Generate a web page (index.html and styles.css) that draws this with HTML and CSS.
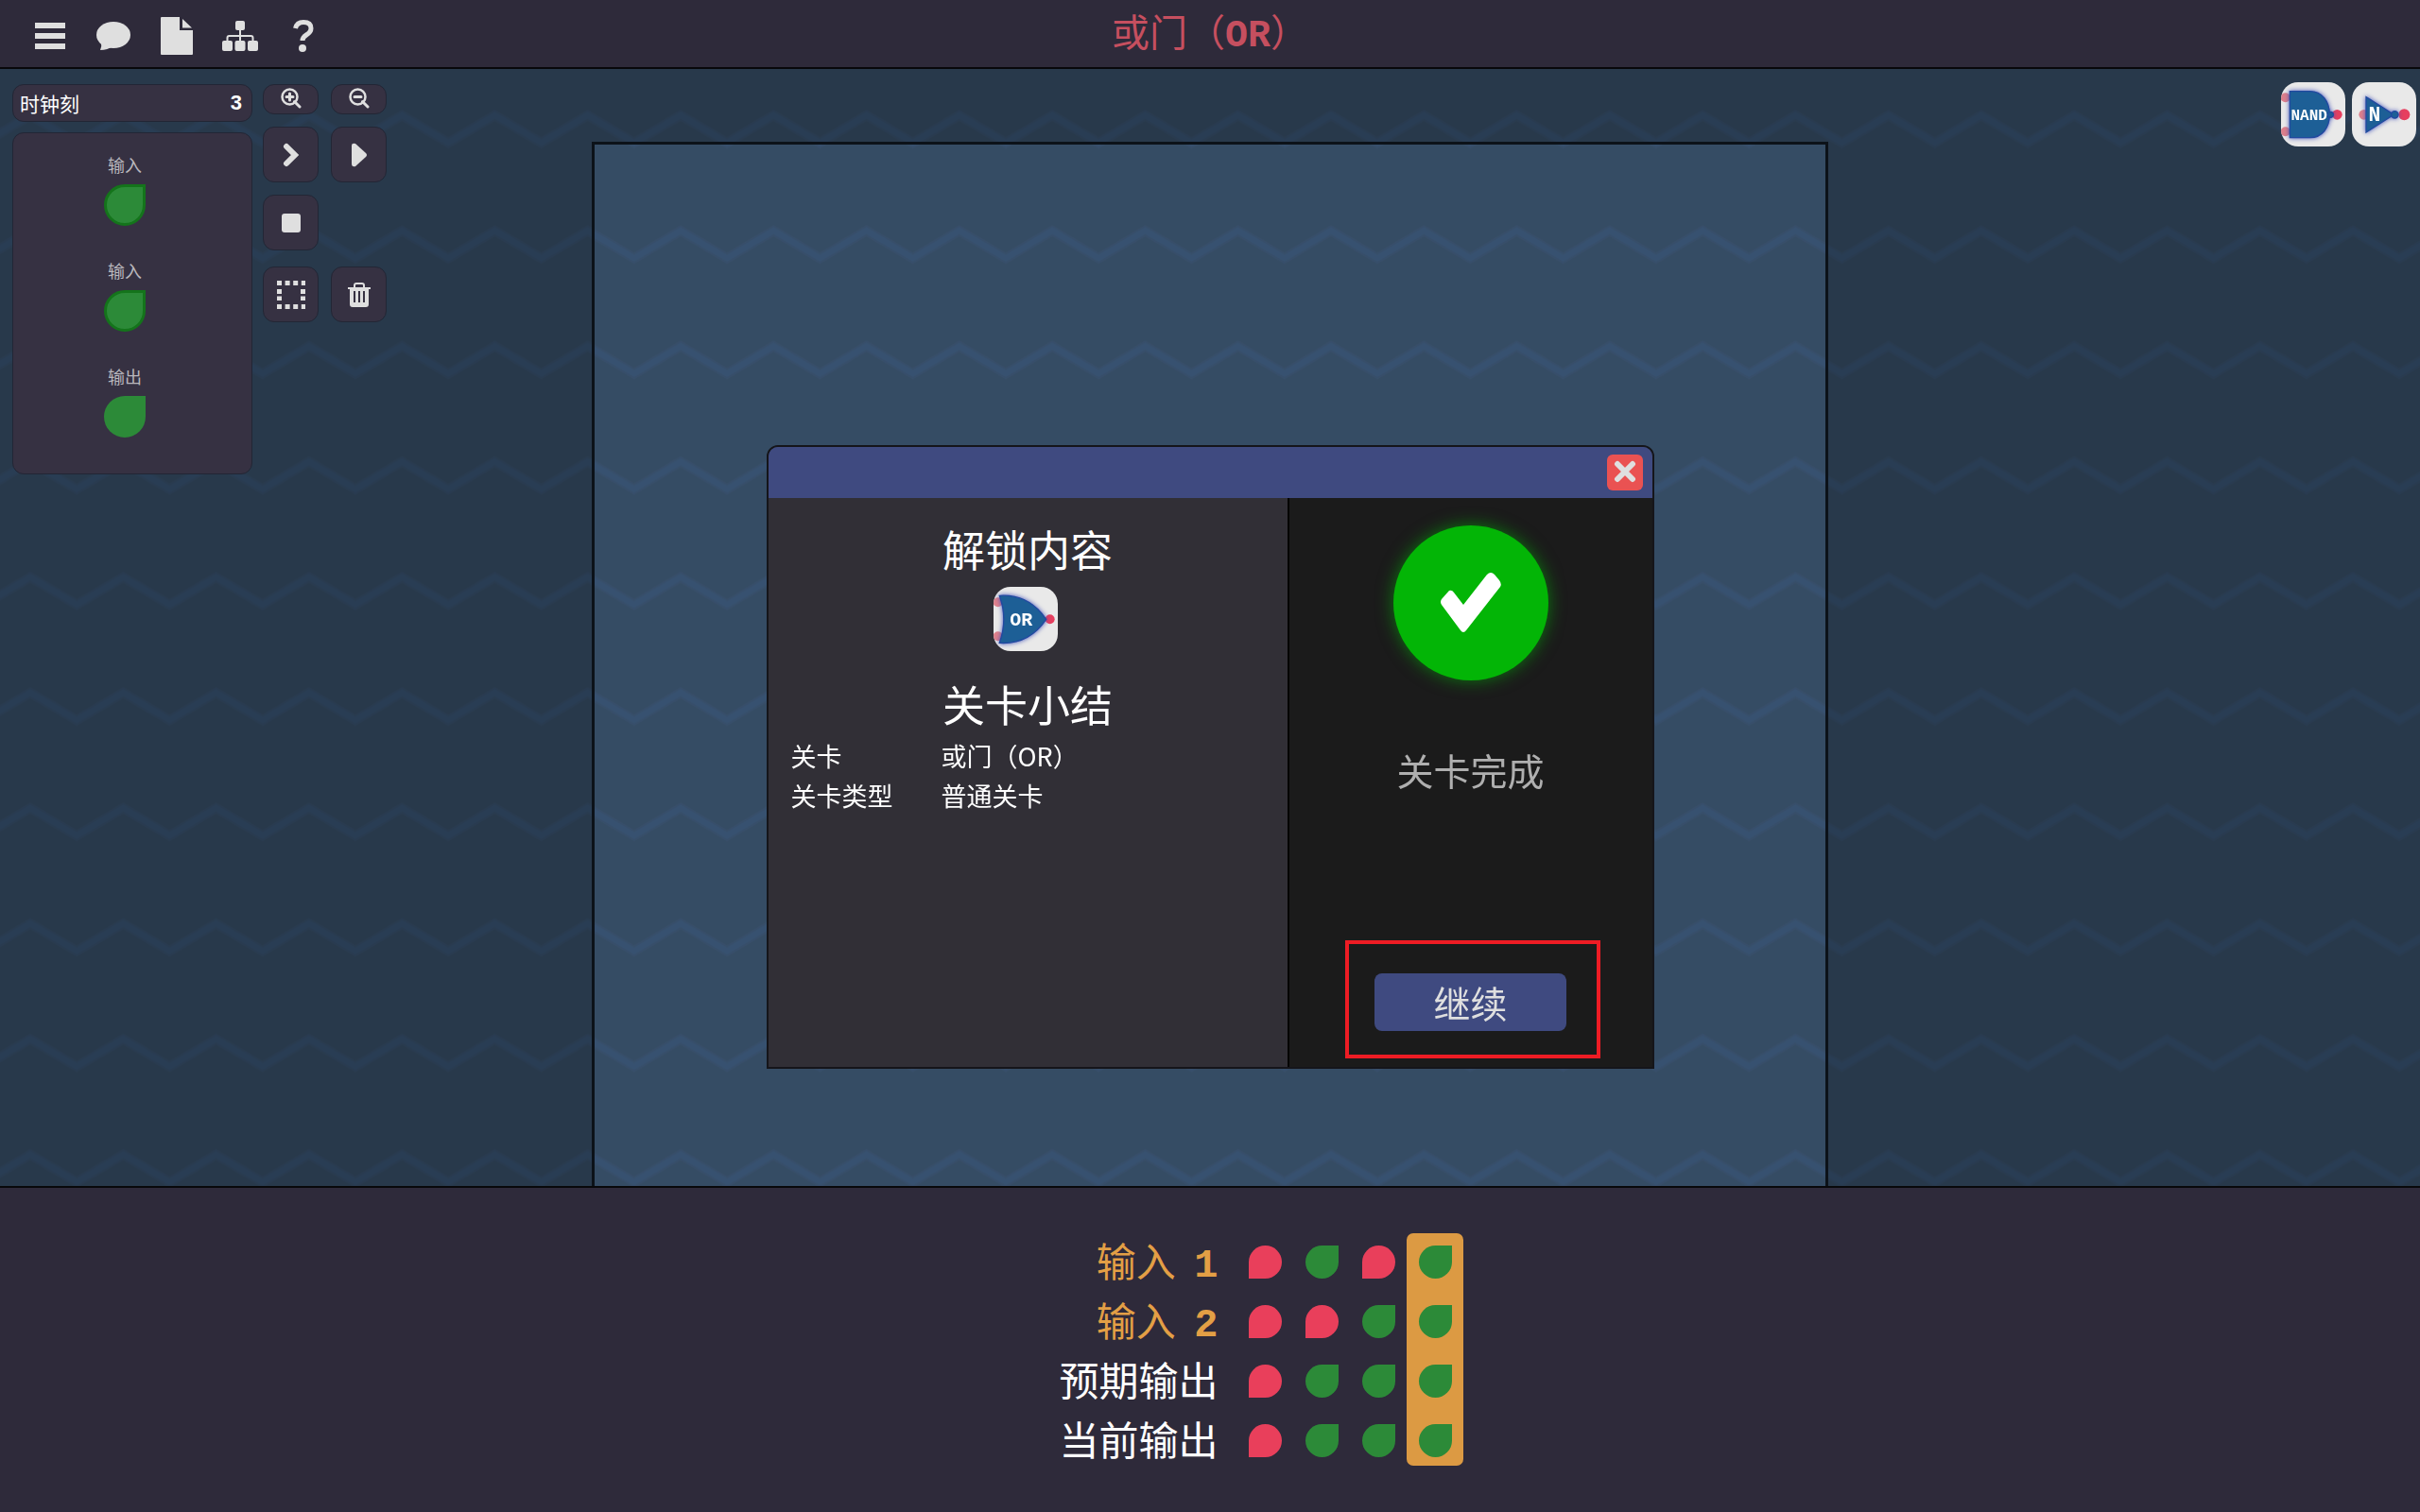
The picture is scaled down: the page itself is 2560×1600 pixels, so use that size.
FILE: index.html
```html
<!DOCTYPE html>
<html lang="zh-CN">
<head>
<meta charset="utf-8">
<meta name="viewport" content="width=device-width, initial-scale=1">
<title>或门（OR）</title>
<link rel="stylesheet" href="styles.css">
</head>
<body>
<header class="topbar">
  <nav class="topbar-nav">
    <button class="nav-button" aria-label="菜单">
      <svg width="34" height="30" viewBox="0 0 34 30"><path d="M1 1h32v6H1zM1 12h32v6H1zM1 23h32v6H1z"/></svg>
    </button>
    <button class="nav-button" aria-label="对话">
      <svg width="38" height="34" viewBox="0 0 38 34"><ellipse cx="19" cy="16" rx="18" ry="14"/><path d="M4 20l2 5q1 3-1 7 8 0 13-4z"/></svg>
    </button>
    <button class="nav-button" aria-label="文件">
      <svg width="34" height="40" viewBox="0 0 34 40"><path d="M1 0h19v14h14v25q0 1-1 1H1q-1 0-1-1V1q0-1 1-1zM23 2l10 9.500H23z"/></svg>
    </button>
    <button class="nav-button" aria-label="结构">
      <svg width="38" height="34" viewBox="0 0 38 34"><rect x="14" y="1" width="10" height="10" rx="2"/><rect x="0" y="22" width="11" height="11" rx="2"/><rect x="13.500" y="22" width="11" height="11" rx="2"/><rect x="27" y="22" width="11" height="11" rx="2"/><path d="M19 10v13M5.500 23v-4q0-2 2-2h23q2 0 2 2v4" fill="none" stroke="currentColor" stroke-width="2"/></svg>
    </button>
    <button class="nav-button" aria-label="帮助">
      <svg width="24" height="36" viewBox="0 0 24 36"><path d="M3.500 10Q5 3.500 12 3.500q8 0 8 6.500 0 4-5 7-4 2.500-4 6" fill="none" stroke="currentColor" stroke-width="5"/><circle cx="11" cy="31" r="4"/></svg>
    </button>
  </nav>
  <h1 class="level-title">或门（<span class="latin">OR</span>）</h1>
</header>

<main class="canvas">
  <svg class="waves" width="100%" height="100%" aria-hidden="true">
    <defs>
      <pattern id="wave" x="-17.100" y="30" width="98.280" height="122.200" patternUnits="userSpaceOnUse">
        <path d="M-49.140 19L0 48 49.140 19 98.280 48 147.420 19" fill="none" stroke="#293b50" stroke-width="10"/>
        <path d="M-49.140 19L0 48 49.140 19 98.280 48 147.420 19" fill="none" stroke="#293d54" stroke-width="6"/>
      </pattern>
    </defs>
    <rect width="100%" height="100%" fill="url(#wave)"/>
  </svg>

  <aside class="tools">
    <div class="tools-info">
      <div class="clock"><span>时钟刻</span><output class="clock-value">3</output></div>
      <ul class="pins">
        <li class="pin"><span>输入</span><i class="leaf leaf-on leaf-large leaf-ring"></i></li>
        <li class="pin"><span>输入</span><i class="leaf leaf-on leaf-large leaf-ring"></i></li>
        <li class="pin"><span>输出</span><i class="leaf leaf-on leaf-large"></i></li>
      </ul>
    </div>
    <div class="tools-actions">
      <div class="tool-group zoom-group">
        <button class="tool tool-short" aria-label="放大">
          <svg width="22" height="22" viewBox="0 0 22 22"><path d="M14.500 14.500L20 20M9.500 6v7M6 9.500h7" stroke="currentColor" stroke-width="3" stroke-linecap="round"/><circle cx="9.500" cy="9.500" r="8" fill="none" stroke="currentColor" stroke-width="2.500"/></svg>
        </button>
        <button class="tool tool-short" aria-label="缩小">
          <svg width="22" height="22" viewBox="0 0 22 22"><path d="M14.500 14.500L20 20M6 9.500h7" stroke="currentColor" stroke-width="3" stroke-linecap="round"/><circle cx="9.500" cy="9.500" r="8" fill="none" stroke="currentColor" stroke-width="2.500"/></svg>
        </button>
      </div>
      <div class="tool-group">
        <button class="tool" aria-label="单步">
          <svg width="20" height="26" viewBox="0 0 20 26"><path d="M5 4l9 9-9 9" fill="none" stroke="currentColor" stroke-width="6" stroke-linecap="round"/></svg>
        </button>
        <button class="tool" aria-label="运行">
          <svg width="20" height="26" viewBox="0 0 20 26"><path d="M2 3q0-3 4-2l11 10q2 2 0 4L6 25q-4 1-4-3z"/></svg>
        </button>
        <button class="tool" aria-label="停止">
          <svg width="20" height="20" viewBox="0 0 20 20"><rect width="20" height="20" rx="3"/></svg>
        </button>
      </div>
      <div class="tool-group">
        <button class="tool" aria-label="框选">
          <svg width="32" height="32" viewBox="0 0 32 32"><path d="M1 3.500h30M1 28.500h30" stroke="currentColor" stroke-width="5" stroke-dasharray="5 3.600"/><path d="M3.500 10v12M28.500 10v12" stroke="currentColor" stroke-width="5" stroke-dasharray="5 2.500"/></svg>
        </button>
        <button class="tool" aria-label="删除">
          <svg width="24" height="26" viewBox="0 0 24 26"><path d="M7 5V3q0-2 2-2h6q2 0 2 2v2" fill="none" stroke="currentColor" stroke-width="2"/><path fill-rule="evenodd" d="M0 5h24v2h-2v16q0 3-3 3H5q-3 0-3-3V7H0zM6 9v12h2V9zM11 9v12h2V9zM16 9v12h2V9z"/></svg>
        </button>
      </div>
    </div>
  </aside>

  <section class="board"></section>

  <aside class="palette">
    <button class="gate" aria-label="NAND">
      <svg width="68" height="68" viewBox="0 0 204 204">
        <circle class="pin-in" cx="14" cy="49" r="15"/><circle class="pin-in" cx="14" cy="157" r="15"/><circle class="pin-out" cx="178" cy="103" r="16"/>
        <g class="gate-body"><path d="M28 29h64c38 0 62 32 62 74s-24 73-62 73H28z"/><circle cx="157" cy="103" r="9"/></g>
        <text class="gate-text" x="89" y="119" font-size="48">NAND</text>
      </svg>
    </button>
    <button class="gate" aria-label="N">
      <svg width="68" height="68" viewBox="0 0 204 204">
        <circle class="pin-in" cx="38" cy="103" r="16"/><circle class="pin-out" cx="166" cy="103" r="18"/>
        <g class="gate-body"><path d="M45 47l88 56-88 56z"/><circle cx="136" cy="103" r="11"/></g>
        <text class="gate-text" x="72" y="124" font-size="64">N</text>
      </svg>
    </button>
  </aside>
</main>

<footer class="results">
  <table class="truth">
    <tbody>
      <tr><th scope="row" class="is-input">输入 <span class="latin index">1</span></th><td><i class="leaf leaf-off"></i></td><td><i class="leaf leaf-on"></i></td><td><i class="leaf leaf-off"></i></td><td class="current"><i class="leaf leaf-on"></i></td></tr>
      <tr><th scope="row" class="is-input">输入 <span class="latin index">2</span></th><td><i class="leaf leaf-off"></i></td><td><i class="leaf leaf-off"></i></td><td><i class="leaf leaf-on"></i></td><td class="current"><i class="leaf leaf-on"></i></td></tr>
      <tr><th scope="row">预期输出</th><td><i class="leaf leaf-off"></i></td><td><i class="leaf leaf-on"></i></td><td><i class="leaf leaf-on"></i></td><td class="current"><i class="leaf leaf-on"></i></td></tr>
      <tr><th scope="row">当前输出</th><td><i class="leaf leaf-off"></i></td><td><i class="leaf leaf-on"></i></td><td><i class="leaf leaf-on"></i></td><td class="current"><i class="leaf leaf-on"></i></td></tr>
    </tbody>
  </table>
</footer>

<div class="overlay">
  <section class="modal" role="dialog" aria-label="关卡完成">
    <div class="modal-bar">
      <button class="close" aria-label="关闭">
        <svg width="24" height="24" viewBox="0 0 24 24"><path d="M4 4l16 16M20 4L4 20" stroke="currentColor" stroke-width="6" stroke-linecap="round"/></svg>
      </button>
    </div>
    <div class="modal-body">
      <div class="summary">
        <h2 class="summary-heading">解锁内容</h2>
        <div class="gate">
          <svg width="68" height="68" viewBox="0 0 204 204">
            <circle class="pin-in" cx="14" cy="49" r="15"/><circle class="pin-in" cx="14" cy="157" r="15"/><circle class="pin-out" cx="179" cy="103" r="15"/>
            <g class="gate-body"><path d="M19 28Q112 22 167 103 112 184 19 178 46 103 19 28z"/></g>
            <text class="gate-text" x="88" y="122" font-size="60">OR</text>
          </svg>
        </div>
        <h2 class="summary-heading">关卡小结</h2>
        <dl class="facts">
          <dt>关卡</dt><dd>或门（OR）</dd>
          <dt>关卡类型</dt><dd>普通关卡</dd>
        </dl>
      </div>
      <div class="outcome">
        <div class="badge">
          <svg width="66" height="66" viewBox="0 0 66 66"><path d="M10 20Q13 19 15 22L25 35 50 3Q54-1 58 3L63 9Q66 13 64 16L28 62Q25 66 22 62L2 35Q0 32 2 29z"/></svg>
        </div>
        <p class="outcome-text">关卡完成</p>
        <div class="continue-wrap"><button class="continue">继续</button></div>
      </div>
    </div>
  </section>
</div>
</body>
</html>
```
FILE: styles.css
```css
:root {
  --bar: #2e2a3a;
  --panel: #363142;
  --accent: #3f4a80;
  --icon: #dfdfdf;
  --green: #2c8a38;
  --red: #e93f5b;
  --orange: #dc9a43;
  --mono: "Liberation Mono", monospace;
  --sans: "Noto Sans CJK SC", sans-serif;
}

* { box-sizing: border-box; }

body {
  display: flex;
  flex-direction: column;
  min-height: 100vh;
  margin: 0;
  background: var(--bar);
  color: #fff;
  font-family: var(--sans);
  font-weight: 400;
}

h1, h2, p, ul, dl, dd { margin: 0; padding: 0; font-weight: 400; }
button { padding: 0; border: 0; font: inherit; color: var(--icon); cursor: pointer; }
svg { display: block; fill: currentColor; }
.latin { font-family: var(--mono); font-weight: 700; }

/* top bar */
.topbar {
  display: grid;
  grid-template-columns: 1fr auto 1fr;
  align-items: center;
  height: 73px;
  border-bottom: 2px solid #08080b;
}
.topbar-nav { display: flex; padding-left: 19px; }
.nav-button {
  display: grid;
  place-items: center;
  width: 67px;
  height: 70px;
  padding-top: 4px;
  background: none;
}
.level-title {
  color: #c64f5f;
  font-size: 40px;
  line-height: 60px;
}

/* work area */
.canvas {
  position: relative;
  flex: 1;
  display: grid;
  grid-template-columns: 1fr 2.09fr 1fr;
  background: #28394b;
}
.waves { position: absolute; inset: 0; }
.tools, .board, .palette { position: relative; }

.tools {
  display: flex;
  align-items: flex-start;
  gap: 11px;
  padding: 16px 0 16px 13px;
}
.tools-info { width: 254px; }
.clock, .pins, .tool {
  border: 1px solid #222635;
  border-radius: 12px;
  background: var(--panel);
}
.clock {
  display: flex;
  align-items: center;
  justify-content: space-between;
  height: 40px;
  padding: 0 10px 0 7px;
  font-size: 21px;
  line-height: 36px;
}
.clock-value { font-family: "Liberation Sans", sans-serif; font-size: 22px; font-weight: 700; }
.pins {
  display: grid;
  gap: 34px;
  margin-top: 11px;
  padding: 20px 16px 38px 0;
  list-style: none;
}
.pin {
  display: grid;
  justify-items: center;
  gap: 8px;
  color: #b9b7bd;
  font-size: 18px;
  line-height: 26px;
}

.tools-actions { display: grid; gap: 17px; }
.zoom-group { margin-bottom: -4px; }
.tool-group { display: grid; grid-template-columns: 59px 59px; gap: 13px; }
.tool { display: grid; place-items: center; height: 59px; }
.tool-short { height: 32px; padding-bottom: 2px; }

.leaf {
  display: block;
  width: 35px;
  height: 35px;
}
.leaf-on { border-radius: 50% 0 50% 50%; background: var(--green); }
.leaf-off { border-radius: 50% 50% 50% 0; background: var(--red); }
.leaf-large { width: 44px; height: 44px; }
.leaf-ring { border: 3px solid #14741b; }

.board {
  border: 3px solid #0c1219;
  border-bottom: 0;
  margin-top: 77px;
  backdrop-filter: brightness(1.33);
}

.palette {
  display: flex;
  align-items: flex-start;
  justify-content: flex-end;
  gap: 7px;
  padding: 14px 4px;
}
.gate {
  width: 68px;
  height: 68px;
  overflow: hidden;
  border-radius: 18px;
  background: #e9e9e9;
}
.gate-body { fill: #1d5f96; stroke: #2149a0; stroke-width: 4; filter: drop-shadow(0 0 8px #4050b8); }
.gate-text { fill: #fff; font-family: var(--mono); font-weight: 700; text-anchor: middle; }
.pin-in { fill: #dd7f8b; }
.pin-out { fill: #e63f5f; }

/* test results */
.results {
  display: flex;
  justify-content: center;
  min-height: 345px;
  padding: 48px 0 40px 108px;
  border-top: 2px solid #08080b;
}
.truth { align-self: flex-start; border-collapse: separate; border-spacing: 0; }
.truth tr { height: 63px; }
.truth tr:last-child { height: 57px; }
.truth th {
  padding: 0 19px 0 0;
  color: #fff;
  font-size: 42px;
  font-weight: 400;
  line-height: 56px;
  text-align: right;
  vertical-align: top;
}
.truth .is-input { color: #e39f45; }
.index { margin-left: 10px; }
.truth td { width: 60px; padding: 13px 12px 0 13px; vertical-align: top; }
.truth .current { background: var(--orange); }
.truth tr:first-child .current { border-radius: 7px 7px 0 0; }
.truth tr:last-child .current { border-radius: 0 0 7px 7px; }

/* completion dialog */
.overlay {
  position: fixed;
  inset: 0;
  display: grid;
  place-items: center;
  padding-top: 2px;
}
.modal {
  display: flex;
  flex-direction: column;
  width: min(939px, 94vw);
  min-height: 660px;
  overflow: hidden;
  border: 2px solid #15151a;
  border-radius: 12px 12px 0 0;
}
.modal-bar {
  display: flex;
  align-items: center;
  justify-content: flex-end;
  height: 54px;
  padding-right: 10px;
  background: var(--accent);
}
.close {
  display: grid;
  place-items: center;
  width: 38px;
  height: 38px;
  padding-bottom: 2px;
  border-radius: 6px;
  background: #ea5252;
}
.modal-body { flex: 1; display: grid; grid-template-columns: 549fr 386fr; }
.summary {
  display: flex;
  flex-direction: column;
  align-items: center;
  padding-top: 20px;
  background: #312f36;
}
.summary-heading { font-size: 45px; line-height: 68px; }
.summary .gate { margin: 6px 4px 22px 0; }
.facts {
  display: grid;
  grid-template-columns: 159px 1fr;
  align-self: stretch;
  padding: 0 24px;
  font-size: 27px;
  line-height: 42px;
}
.outcome {
  display: flex;
  flex-direction: column;
  align-items: center;
  padding: 29px 0 38px;
  border-left: 2px solid #050505;
  background: #1b1b1b;
}
.badge {
  display: grid;
  place-items: center;
  width: 164px;
  height: 164px;
  border-radius: 50%;
  background: #03b506;
  box-shadow: 0 0 18px #03b50699;
  color: #fff;
}
.outcome-text { margin: 64px 0 auto; color: #afafaf; font-size: 39px; line-height: 60px; }
.continue-wrap { position: relative; }
.continue-wrap::after {
  content: "";
  position: absolute;
  inset: -35px -36px -29px -31px;
  border: 4px solid #ee1c24;
  pointer-events: none;
}
.continue {
  display: block;
  width: 203px;
  height: 61px;
  padding-bottom: 2px;
  border-radius: 8px;
  background: var(--accent);
  font-size: 39px;
  line-height: 58px;
}
```
